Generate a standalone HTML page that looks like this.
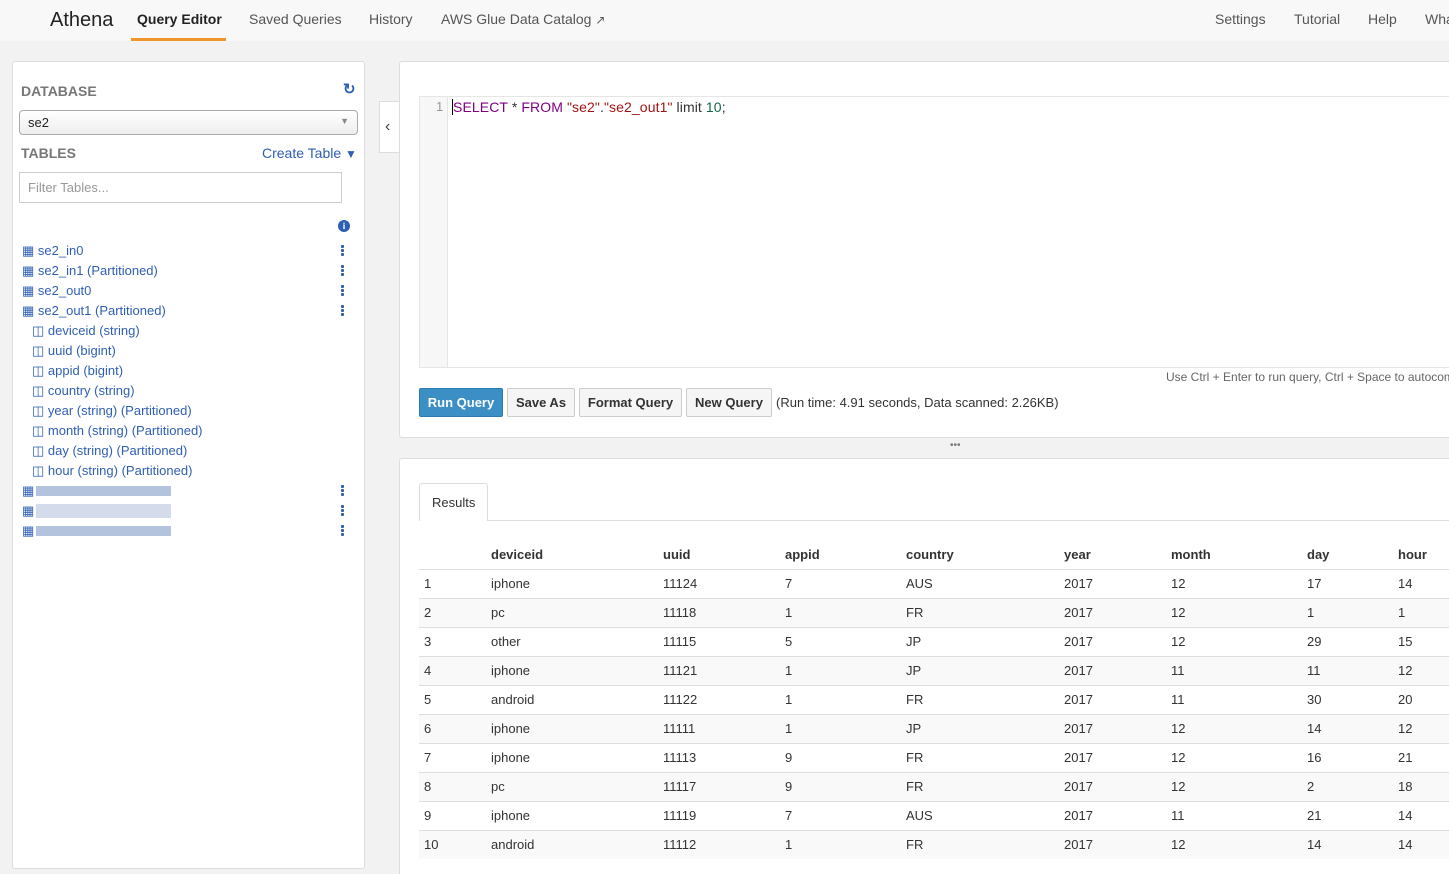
<!DOCTYPE html>
<html style="width:1449px;height:874px;overflow:hidden"><head><meta charset="utf-8"><style>
*{box-sizing:border-box;margin:0;padding:0}
body{width:1449px;height:874px;overflow:hidden;background:#f2f2f2;font-family:"Liberation Sans",Arial,sans-serif;font-size:13px;color:#333;position:relative}
.abs{position:absolute;white-space:nowrap}
.nav{position:absolute;left:0;top:0;width:1449px;height:41px;background:#f8f8f8}
.nav .i{position:absolute;top:11px;font-size:14px;color:#555;white-space:nowrap}
.lp{position:absolute;left:12px;top:61px;width:353px;height:808px;background:#fff;border:1px solid #ddd;border-radius:3px}
.ep{position:absolute;left:399px;top:61px;width:1050px;height:377px;background:#fff;border:1px solid #ddd;border-right:none;border-radius:3px 0 0 3px}
.rp{position:absolute;left:399px;top:458px;width:1050px;height:416px;background:#fff;border:1px solid #ddd;border-right:none;border-bottom:none;border-radius:3px 0 0 0}
.lnk{color:#2f5fb3}
.row{position:absolute;left:22px;font-size:13px;color:#2f5fb3;white-space:nowrap}
.dots{position:absolute;left:341px;width:3px}
.dots i{display:block;width:3px;height:3px;background:#2f5fb3;margin-bottom:1px;border-radius:1px}
.btn{position:absolute;top:388px;height:29px;border:1px solid #ccc;background:#f5f5f5;border-radius:2px;font-weight:bold;font-size:13px;color:#333;text-align:center;line-height:27px}
table{position:absolute;left:419px;top:540px;width:1030px;border-collapse:collapse;font-size:13px}
td,th{height:29px;padding:0 0 0 5px;text-align:left;border-top:1px solid #ddd;vertical-align:middle}
th{border-top:none;border-bottom:1px solid #ddd}
tr:nth-child(odd) td{background:#f9f9f9}
</style></head><body>
<div class="nav">
<div class="abs" style="left:50px;top:9px;font-size:20px;color:#222">Athena</div>
<div class="i" style="left:137px;color:#222;font-weight:bold">Query Editor</div>
<div style="position:absolute;left:131px;top:38px;width:95px;height:3px;background:#f0952b"></div>
<div class="i" style="left:249px">Saved Queries</div>
<div class="i" style="left:369px">History</div>
<div class="i" style="left:441px">AWS Glue Data Catalog <span style="font-size:12px">&#x2197;</span></div>
<div class="i" style="left:1215px">Settings</div>
<div class="i" style="left:1294px">Tutorial</div>
<div class="i" style="left:1368px">Help</div>
<div class="i" style="left:1425px">What's new</div>
</div>

<div class="lp"></div>
<div class="abs" style="left:21px;top:83px;font-size:14px;font-weight:bold;color:#777">DATABASE</div>
<div class="abs lnk" style="left:343px;top:80px;font-size:15px;font-weight:bold">&#x21bb;</div>
<div class="abs" style="left:19px;top:110px;width:339px;height:25px;border:1px solid #aaa;border-radius:4px;background:linear-gradient(#fff,#eee);padding:4px 8px;font-size:13px;color:#222">se2<span style="position:absolute;right:8px;top:5px;color:#888;font-size:9px">&#9660;</span></div>
<div class="abs" style="left:21px;top:145px;font-size:14px;font-weight:bold;color:#777">TABLES</div>
<div class="abs lnk" style="left:262px;top:145px;font-size:14px">Create Table <span style="font-size:12px">&#9660;</span></div>
<div class="abs" style="left:19px;top:172px;width:323px;height:31px;border:1px solid #ccc;padding:7px 8px;color:#999;font-size:13px">Filter Tables...</div>
<div class="abs" style="left:338px;top:220px;width:12px;height:12px;border-radius:6px;background:#2f5fb3;color:#fff;font-size:9px;font-weight:bold;text-align:center;line-height:12px;font-family:'Liberation Serif',serif">i</div>

<div class="row" style="top:243px">&#x25a6; se2_in0</div>
<div class="row" style="top:263px">&#x25a6; se2_in1 (Partitioned)</div>
<div class="row" style="top:283px">&#x25a6; se2_out0</div>
<div class="row" style="top:303px">&#x25a6; se2_out1 (Partitioned)</div>
<div class="row" style="left:32px;top:323px">&#x25eb; deviceid (string)</div>
<div class="row" style="left:32px;top:343px">&#x25eb; uuid (bigint)</div>
<div class="row" style="left:32px;top:363px">&#x25eb; appid (bigint)</div>
<div class="row" style="left:32px;top:383px">&#x25eb; country (string)</div>
<div class="row" style="left:32px;top:403px">&#x25eb; year (string) (Partitioned)</div>
<div class="row" style="left:32px;top:423px">&#x25eb; month (string) (Partitioned)</div>
<div class="row" style="left:32px;top:443px">&#x25eb; day (string) (Partitioned)</div>
<div class="row" style="left:32px;top:463px">&#x25eb; hour (string) (Partitioned)</div>
<div class="row" style="top:483px">&#x25a6;</div><div class="abs" style="left:36px;top:486px;width:135px;height:10px;background:#b3c2dd"></div>
<div class="row" style="top:503px">&#x25a6;</div><div class="abs" style="left:36px;top:504px;width:135px;height:14px;background:#d4dcec"></div>
<div class="row" style="top:523px">&#x25a6;</div><div class="abs" style="left:36px;top:526px;width:135px;height:10px;background:#b3c2dd"></div>
<div class="dots" style="top:245px"><i></i><i></i><i></i></div>
<div class="dots" style="top:265px"><i></i><i></i><i></i></div>
<div class="dots" style="top:285px"><i></i><i></i><i></i></div>
<div class="dots" style="top:305px"><i></i><i></i><i></i></div>
<div class="dots" style="top:485px"><i></i><i></i><i></i></div>
<div class="dots" style="top:505px"><i></i><i></i><i></i></div>
<div class="dots" style="top:525px"><i></i><i></i><i></i></div>

<div class="ep"></div>
<div class="abs" style="left:379px;top:101px;width:20px;height:52px;background:#fff;border:1px solid #ddd;border-right:none;font-size:16px;color:#444;padding:16px 0 0 5px">&#x2039;</div>
<div class="abs" style="left:419px;top:96px;width:1030px;height:272px;border:1px solid #e5e5e5;border-right:none"></div>
<div class="abs" style="left:420px;top:97px;width:28px;height:270px;background:#f7f7f7;border-right:1px solid #e5e5e5"></div>
<div class="abs" style="left:436px;top:99px;color:#999;font-size:13px">1</div>
<div class="abs" style="left:452px;top:99px;font-size:14px;letter-spacing:0.1px;color:#800080;border-left:1px solid #000">SELECT <span style="color:#333">*</span> FROM <span style="color:#a31515">"se2"</span><span style="color:#333">.</span><span style="color:#a31515">"se2_out1"</span> <span style="color:#333">limit</span> <span style="color:#116644">10</span><span style="color:#333">;</span></div>
<div class="abs" style="left:1166px;top:370px;font-size:12px;color:#666">Use Ctrl + Enter to run query, Ctrl + Space to autocomplete</div>
<div class="btn" style="left:419px;width:84px;background:#3b8fc4;border-color:#2f7bb0;color:#fff">Run Query</div>
<div class="btn" style="left:507px;width:68px">Save As</div>
<div class="btn" style="left:579px;width:103px">Format Query</div>
<div class="btn" style="left:686px;width:86px">New Query</div>
<div class="abs" style="left:776px;top:395px;font-size:13px;color:#333">(Run time: 4.91 seconds, Data scanned: 2.26KB)</div>
<div class="abs" style="left:950px;top:440px;font-size:10px;color:#777">&#x2022;&#x2022;&#x2022;</div>

<div class="rp"></div>
<div class="abs" style="left:419px;top:483px;width:69px;height:38px;background:#fff;border:1px solid #ddd;border-bottom:none;border-radius:3px 3px 0 0;padding:11px 12px;font-size:13px;z-index:2">Results</div>
<div class="abs" style="left:419px;top:520px;width:1030px;height:1px;background:#ddd"></div>
<table>
<tr style="background:#fff"><th style="width:67px"></th><th style="width:172px">deviceid</th><th style="width:122px">uuid</th><th style="width:121px">appid</th><th style="width:158px">country</th><th style="width:107px">year</th><th style="width:136px">month</th><th style="width:91px">day</th><th>hour</th></tr>
<tr><td>1</td><td>iphone</td><td>11124</td><td>7</td><td>AUS</td><td>2017</td><td>12</td><td>17</td><td>14</td></tr>
<tr><td>2</td><td>pc</td><td>11118</td><td>1</td><td>FR</td><td>2017</td><td>12</td><td>1</td><td>1</td></tr>
<tr><td>3</td><td>other</td><td>11115</td><td>5</td><td>JP</td><td>2017</td><td>12</td><td>29</td><td>15</td></tr>
<tr><td>4</td><td>iphone</td><td>11121</td><td>1</td><td>JP</td><td>2017</td><td>11</td><td>11</td><td>12</td></tr>
<tr><td>5</td><td>android</td><td>11122</td><td>1</td><td>FR</td><td>2017</td><td>11</td><td>30</td><td>20</td></tr>
<tr><td>6</td><td>iphone</td><td>11111</td><td>1</td><td>JP</td><td>2017</td><td>12</td><td>14</td><td>12</td></tr>
<tr><td>7</td><td>iphone</td><td>11113</td><td>9</td><td>FR</td><td>2017</td><td>12</td><td>16</td><td>21</td></tr>
<tr><td>8</td><td>pc</td><td>11117</td><td>9</td><td>FR</td><td>2017</td><td>12</td><td>2</td><td>18</td></tr>
<tr><td>9</td><td>iphone</td><td>11119</td><td>7</td><td>AUS</td><td>2017</td><td>11</td><td>21</td><td>14</td></tr>
<tr><td>10</td><td>android</td><td>11112</td><td>1</td><td>FR</td><td>2017</td><td>12</td><td>14</td><td>14</td></tr>
</table>
</body></html>
